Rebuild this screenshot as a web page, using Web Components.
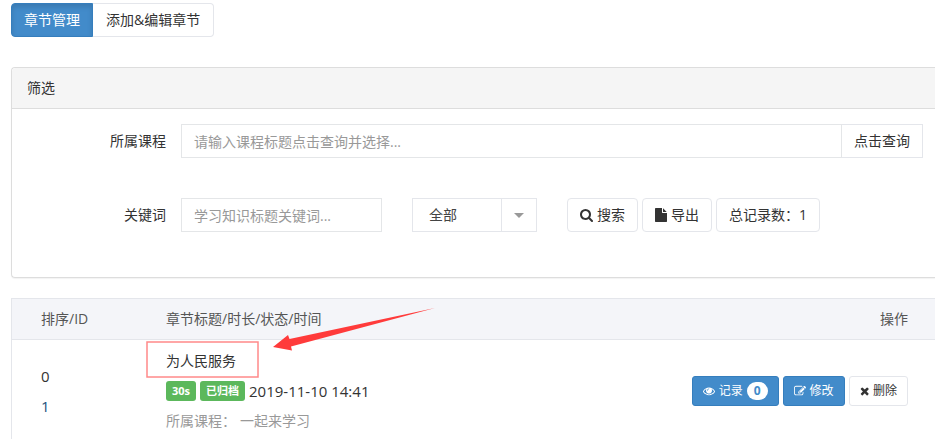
<!DOCTYPE html>
<html lang="zh-CN">
<head>
<meta charset="utf-8">
<title>章节管理</title>
<style>
  body {
    margin: 0;
    background: #fff;
    color: #333;
    font: 14px/20px "Open Sans", "Noto Sans CJK SC", sans-serif;
  }
</style>
</head>
<body>
<chapter-page></chapter-page>

<script>
// width is the advance of the glyph in a 1792 high box, x its left edge
const ICONS = {
  search: { x: 0, width: 1664, path: "M1152 832q0-185-131.5-316.5t-316.5-131.5-316.5 131.5-131.5 316.5 131.5 316.5 316.5 131.5 316.5-131.5 131.5-316.5zm512 832q0 52-38 90t-90 38q-54 0-90-38l-343-342q-179 124-399 124-143 0-273.5-55.5t-225-150-150-225-55.5-273.5 55.5-273.5 150-225 225-150 273.5-55.5 273.5 55.5 225 150 150 225 55.5 273.5q0 220-124 399l343 343q37 37 37 90z" },
  file: { x: 0, width: 1536, path: "M1024 512v-472q22 14 36 28l408 408q14 14 28 36h-472zm-128 32q0 40 28 68t68 28h544v1056q0 40-28 68t-68 28h-1344q-40 0-68-28t-28-68v-1600q0-40 28-68t68-28h800v544z" },
  eye: { x: 0, width: 1792, path: "M1664 960q-152-236-381-353 61 104 61 225 0 185-131.5 316.5t-316.5 131.5-316.5-131.5-131.5-316.5q0-121 61-225-229 117-381 353 133 205 333.5 326.5t434.5 121.5 434.5-121.5 333.5-326.5zm-720-384q0-20-14-34t-34-14q-125 0-214.5 89.5t-89.5 214.5q0 20 14 34t34 14 34-14 14-34q0-86 61-147t147-61q20 0 34-14t14-34zm848 384q0 34-20 69-140 230-376.5 368.5t-499.5 138.5-499.5-139-376.5-368q-20-35-20-69t20-69q140-229 376.5-368t499.5-139 499.5 139 376.5 368q20 35 20 69z" },
  edit: { x: 0, width: 1792, path: "M888 1184l116-116-152-152-116 116v56h96v96h56zm440-720q-16-16-33 1l-350 350q-17 17-1 33t33-1l350-350q17-17 1-33zm80 594v190q0 119-84.5 203.5t-203.5 84.5h-832q-119 0-203.5-84.5t-84.5-203.5v-832q0-119 84.5-203.5t203.5-84.5h832q63 0 117 25 15 7 18 23 3 17-9 29l-49 49q-14 14-32 8-23-6-45-6h-832q-66 0-113 47t-47 113v832q0 66 47 113t113 47h832q66 0 113-47t47-113v-126q0-13 9-22l64-64q15-15 35-7t20 29zm-96-738l288 288-672 672h-288v-288zm444 132l-92 92-288-288 92-92q28-28 68-28t68 28l152 152q28 28 28 68t-28 68z" },
  times: { x: 192, width: 1408, path: "M1490 1322q0 40-28 68l-136 136q-28 28-68 28t-68-28l-294-294-294 294q-28 28-68 28t-68-28l-136-136q-28-28-28-68t28-68l294-294-294-294q-28-28-28-68t28-68l136-136q28-28 68-28t68 28l294 294 294-294q28-28 68-28t68 28l136 136q28 28 28 68t-28 68l-294 294 294 294q28 28 28 68z" }
};

class BaseElement extends HTMLElement {
  constructor() {
    super();
    this.attachShadow({ mode: "open" });
  }

  connectedCallback() {
    const template = document.createElement("template");
    template.innerHTML = `<style>${this.getStyles()}</style>${this.getTemplate()}`;
    this.shadowRoot.replaceChildren(template.content.cloneNode(true));
  }
}

class AppIcon extends BaseElement {
  getStyles() {
    return `
      :host { display: inline-flex; flex: none; }
      svg { width: auto; height: var(--icon-size, 14px); fill: currentColor; }
    `;
  }

  getTemplate() {
    const { x, width, path } = ICONS[this.getAttribute("name")];
    return `<svg viewBox="${x} 0 ${width} 1792" aria-hidden="true"><path d="${path}"/></svg>`;
  }
}

// variants: default, primary; size: default, small
class AppButton extends BaseElement {
  getStyles() {
    return `
      :host { display: inline-flex; }
      button {
        display: flex;
        align-items: center;
        gap: 4px;
        height: 34px;
        padding: 0 12px;
        border: 1px solid #e4e6eb;
        border-radius: 4px;
        background: #fff;
        color: #333;
        font: inherit;
        white-space: nowrap;
        cursor: pointer;
      }
      :host([size="small"]) button {
        height: 30px;
        padding: 0 10px;
        border-radius: 3px;
        font-size: 12px;
        --icon-size: 12px;
      }
      :host([variant="primary"]) button {
        background: #428bca;
        border-color: #357ebd;
        color: #fff;
      }
      :host([attached]) button { border-radius: 0; border-left: 0; }
    `;
  }

  getTemplate() {
    const icon = this.getAttribute("icon");
    return `<button type="button">${icon ? `<app-icon name="${icon}"></app-icon>` : ""}<slot></slot></button>`;
  }
}

class TabGroup extends BaseElement {
  getStyles() {
    return `
      :host { display: flex; }
      button {
        height: 34px;
        padding: 0 13px;
        border: 1px solid #e4e6eb;
        border-left: 0;
        border-radius: 0 4px 4px 0;
        background: #fff;
        color: #333;
        font: inherit;
      }
      button.active {
        padding: 0 12px;
        border: 1px solid #357ebd;
        border-radius: 4px 0 0 4px;
        background: #428bca;
        box-shadow: inset 0 3px 5px rgba(0, 0, 0, .125);
        color: #fff;
      }
    `;
  }

  getTemplate() {
    return `
      <button type="button" class="active">章节管理</button>
      <button type="button">添加&amp;编辑章节</button>
    `;
  }
}

class FilterPanel extends BaseElement {
  getStyles() {
    return `
      :host {
        display: block;
        border: 1px solid #ddd;
        border-right: 0;
        border-radius: 4px 0 0 4px;
        box-shadow: 0 1px 1px rgba(0, 0, 0, .05);
      }
      header {
        padding: 10px 15px;
        border-bottom: 1px solid #ddd;
        border-radius: 4px 0 0 0;
        background: #f5f5f5;
      }
      form {
        display: flex;
        flex-direction: column;
        gap: 40px;
        padding: 15px 12px 45px 15px;
      }
      .row { display: flex; align-items: center; }
      .row > label { flex: none; width: 139px; margin-right: 15px; text-align: right; }
      input {
        box-sizing: border-box;
        height: 34px;
        padding: 0 12px;
        border: 1px solid #e4e6e8;
        border-radius: 0;
        background: #fff;
        color: #555;
        font: inherit;
      }
      input::placeholder { color: #999; opacity: 1; }
      #course { flex: 1; min-width: 0; }
      #keyword { width: 201px; }
      .select {
        display: flex;
        box-sizing: border-box;
        width: 125px;
        height: 34px;
        margin: 0 30px;
        border: 1px solid #e4e6eb;
      }
      select {
        flex: 1;
        min-width: 0;
        padding: 0 16px;
        border: 0;
        appearance: none;
        background: none;
        color: #444;
        font: inherit;
      }
      .caret {
        display: grid;
        place-items: center;
        width: 34px;
        border-left: 1px solid #e4e6eb;
      }
      .caret::before {
        content: "";
        border: 5px solid transparent;
        border-top-color: #999;
        border-bottom: 0;
      }
      .buttons { display: flex; gap: 4px; }
    `;
  }

  getTemplate() {
    return `
      <header>筛选</header>
      <form>
        <div class="row">
          <label for="course">所属课程</label>
          <input id="course" type="text" placeholder="请输入课程标题点击查询并选择...">
          <app-button attached>点击查询</app-button>
        </div>
        <div class="row">
          <label for="keyword">关键词</label>
          <input id="keyword" type="text" placeholder="学习知识标题关键词...">
          <div class="select">
            <select aria-label="状态"><option>全部</option></select>
            <span class="caret"></span>
          </div>
          <div class="buttons">
            <app-button icon="search">搜索</app-button>
            <app-button icon="file">导出</app-button>
            <app-button>总记录数：1</app-button>
          </div>
        </div>
      </form>
    `;
  }
}

class StatusLabel extends BaseElement {
  getStyles() {
    return `
      :host {
        display: inline-flex;
        align-items: center;
        height: 20px;
        padding: 0 6px;
        border-radius: 3px;
        background: #5cb85c;
        color: #fff;
        font-size: 11px;
        font-weight: 700;
      }
    `;
  }

  getTemplate() {
    return `<slot></slot>`;
  }
}

class CountBadge extends BaseElement {
  getStyles() {
    return `
      :host {
        display: inline-block;
        padding: 0 7px;
        border-radius: 10px;
        background: #fff;
        color: #428bca;
        font-size: 12px;
        font-weight: 700;
        line-height: 18px;
      }
    `;
  }

  getTemplate() {
    return `<slot></slot>`;
  }
}

// red frame and arrow laid over the chapter title
class TitleCallout extends BaseElement {
  getStyles() {
    return `
      :host {
        position: absolute;
        left: -20px;
        top: -38px;
        pointer-events: none;
      }
      svg { display: block; }
    `;
  }

  getTemplate() {
    return `
      <svg width="292" height="72" viewBox="0 0 292 72" aria-hidden="true">
        <rect x="1" y="34" width="111" height="35" fill="none" stroke="#ff3b3b" stroke-opacity=".6" stroke-width="1.5"/>
        <path d="M127 39L142 27L143.500 31L289 0L145 38.500L146 42.500Z" fill="#ff3b3b"/>
      </svg>
    `;
  }
}

class ChapterTable extends BaseElement {
  getStyles() {
    return `
      :host { display: block; }
      table {
        width: 100%;
        border: 1px solid #e4e6eb;
        border-width: 1px 0 0 1px;
        border-spacing: 0;
      }
      th {
        height: 40px;
        padding: 0;
        border-bottom: 1px solid #e4e6eb;
        background: #f4f5f9;
        color: #555;
        font-weight: 400;
        text-align: left;
      }
      td { padding: 6px 0 3px; line-height: 30px; }
      .sort { width: 125px; padding-left: 29px; }
      td.sort { font-size: 15px; }
      .sort a { display: block; color: #23527c; text-decoration: none; }
      .ops { padding-right: 27px; text-align: right; }
      .title { position: relative; }
      .status { display: flex; align-items: center; gap: 4px; }
      .status time { font-size: 15px; }
      .course { color: #999; }
      .course span { margin-left: 4px; }
      .actions { display: flex; justify-content: flex-end; gap: 4px; }
    `;
  }

  getTemplate() {
    return `
      <table>
        <thead>
          <tr>
            <th class="sort">排序/ID</th>
            <th>章节标题/时长/状态/时间</th>
            <th class="ops">操作</th>
          </tr>
        </thead>
        <tbody>
          <tr>
            <td class="sort">0<a href="#">1</a></td>
            <td>
              <div class="title">为人民服务<title-callout></title-callout></div>
              <div class="status">
                <status-label>30s</status-label>
                <status-label>已归档</status-label>
                <time>2019-11-10 14:41</time>
              </div>
              <div class="course">所属课程：<span>一起来学习</span></div>
            </td>
            <td class="ops">
              <div class="actions">
                <app-button icon="eye" variant="primary" size="small">记录 <count-badge>0</count-badge></app-button>
                <app-button icon="edit" variant="primary" size="small">修改</app-button>
                <app-button icon="times" size="small">删除</app-button>
              </div>
            </td>
          </tr>
        </tbody>
      </table>
    `;
  }
}

class ChapterPage extends BaseElement {
  getStyles() {
    return `
      :host { display: block; padding: 3px 0 0 11px; }
      filter-panel { margin: 30px 0 20px; }
    `;
  }

  getTemplate() {
    return `
      <tab-group></tab-group>
      <filter-panel></filter-panel>
      <chapter-table></chapter-table>
    `;
  }
}

customElements.define("app-icon", AppIcon);
customElements.define("app-button", AppButton);
customElements.define("tab-group", TabGroup);
customElements.define("filter-panel", FilterPanel);
customElements.define("status-label", StatusLabel);
customElements.define("count-badge", CountBadge);
customElements.define("title-callout", TitleCallout);
customElements.define("chapter-table", ChapterTable);
customElements.define("chapter-page", ChapterPage);
</script>
</body>
</html>
